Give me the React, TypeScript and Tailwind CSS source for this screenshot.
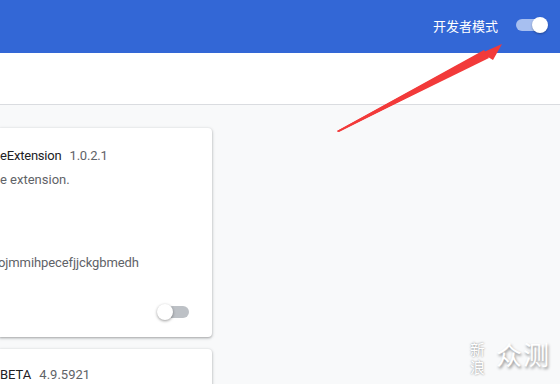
import React from "react";

export default function App() {
  return (
    <div
      className="relative w-[560px] h-[384px] overflow-hidden flex flex-col bg-[#f8f9fa]"
      style={{ fontFamily: "Roboto, 'Noto Sans CJK SC', sans-serif" }}
    >
      <div className="h-[53px] shrink-0 bg-[#3367d6] flex items-center justify-end pr-[12px] pb-[3px]">
        <span
          className="text-[13px] text-white leading-none"
          style={{ fontFamily: "'Noto Sans CJK SC', sans-serif" }}
        >
          开发者模式
        </span>
        <div className="relative ml-[18px] w-[32px] h-[16px] flex items-center">
          <div className="w-[28px] h-[12px] rounded-full bg-[#a7bff0]" />
          <div className="absolute right-0 top-0 w-[16px] h-[16px] rounded-full bg-white shadow-[0_1px_2px_rgba(0,0,0,0.3)]" />
        </div>
      </div>
      <div className="h-[52px] shrink-0 bg-white border-b border-[#dadce0]" />
      <div className="flex flex-col gap-[12px] pt-[23px]">
        <div className="w-[212px] h-[209px] bg-white rounded-r-[4px] shadow-[0_1px_2px_rgba(60,64,67,0.3),0_1px_3px_1px_rgba(60,64,67,0.15)] flex flex-col pt-[20px]">
          <div className="h-[16px] leading-[16px] text-[13px] whitespace-nowrap tracking-[-0.2px]">
            <span className="text-[#202124]">eExtension</span>
            <span className="text-[#5f6368] ml-[8px]">1.0.2.1</span>
          </div>
          <div className="mt-[8px] h-[16px] leading-[16px] text-[13px] text-[#5f6368] whitespace-nowrap">
            e extension.
          </div>
          <div className="mt-[67px] h-[16px] leading-[16px] text-[13px] text-[#5f6368] whitespace-nowrap -ml-[2px] tracking-[-0.1px]">
            ojmmihpecefjjckgbmedh
          </div>
          <div className="mt-[33px] flex justify-end pr-[23px]">
            <div className="relative w-[32px] h-[16px] flex items-center justify-end">
              <div className="w-[28px] h-[12px] rounded-full bg-[#bdc1c6]" />
              <div className="absolute left-0 top-0 w-[16px] h-[16px] rounded-full bg-white shadow-[0_1px_3px_rgba(0,0,0,0.4)]" />
            </div>
          </div>
        </div>
        <div className="w-[212px] h-[60px] bg-white rounded-r-[4px] shadow-[0_1px_2px_rgba(60,64,67,0.3),0_1px_3px_1px_rgba(60,64,67,0.15)] pt-[18px]">
          <div className="h-[16px] leading-[16px] text-[13px] whitespace-nowrap">
            <span className="text-[#202124]">BETA</span>
            <span className="text-[#5f6368] ml-[8px]">4.9.5921</span>
          </div>
        </div>
      </div>

      <svg className="absolute left-0 top-0 pointer-events-none" width="560" height="384" viewBox="0 0 560 384">
        <polygon points="337,131 482,52 477,55 502,44 493,60 488,57 339,132" fill="#f23a3a" />
        <polygon points="337,131 484,50 489,58 338,132" fill="#f23a3a" />
      </svg>

      <div className="absolute left-[470px] top-[340px] flex items-center gap-[11px] pointer-events-none" style={{ fontFamily: "'Noto Sans CJK SC', sans-serif" }}>
        <div className="flex flex-col text-[15px] leading-[18px] text-white" style={{ textShadow: "0 0 2px rgba(0,0,0,0.5)" }}>
          <span>新</span>
          <span>浪</span>
        </div>
        <div className="text-[26px] leading-none text-white tracking-[1px] mb-[8px]" style={{ textShadow: "1px 2px 3px rgba(0,0,0,0.45)" }}>
          众测
        </div>
      </div>
    </div>
  );
}
